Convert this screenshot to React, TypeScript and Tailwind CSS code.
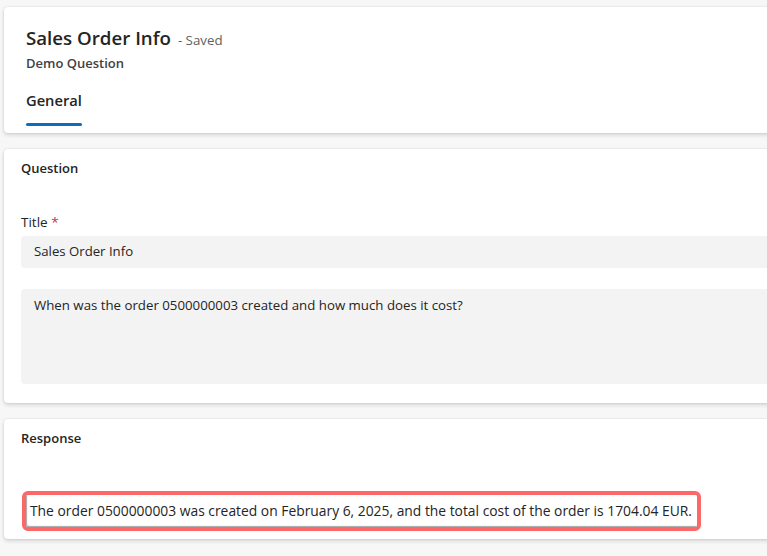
import React from "react"

const font = { fontFamily: '"Segoe UI", "Open Sans", "Noto Sans", sans-serif' }

const Card = ({ className, children }: { className?: string; children: React.ReactNode }) => (
  <div
    className={`ml-1 -mr-6 bg-white rounded-[4px] shadow-[0_0_2px_rgba(0,0,0,0.12),0_2px_4px_rgba(0,0,0,0.14)] ${className ?? ""}`}
  >
    {children}
  </div>
)

const App = () => {
  return (
    <div
      className="w-[767px] h-[556px] overflow-hidden bg-[#f7f7f7] pt-[7px] text-[#242424]"
      style={font}
    >
      <Card className="h-[126px] px-[22px] pt-[17px]">
        <div className="flex items-baseline gap-[7px]">
          <h1 className="text-[18.7px] font-semibold leading-[28px]">Sales Order Info</h1>
          <span className="text-[13.3px] text-[#616161]">- Saved</span>
        </div>
        <p className="text-[13px] font-semibold text-[#424242] leading-[18px] mt-[2px]">Demo Question</p>
        <div className="mt-[18px] inline-flex flex-col">
          <span className="text-[14.7px] font-semibold leading-[20px]">General</span>
          <span className="mt-[13px] h-[3px] rounded-full bg-[#0f6cbd]" />
        </div>
      </Card>

      <Card className="mt-4 h-[254px] px-[17px] pt-[10px]">
        <h2 className="text-[13px] font-semibold leading-[18px]">Question</h2>
        <label className="block mt-[35px] text-[13.5px] leading-[20px]">
          Title <span className="text-[#c4314b]">*</span>
        </label>
        <div className="mt-[4px] h-[32px] rounded-[4px] bg-[#f3f3f3] px-[13px] flex items-center text-[13.2px]">
          Sales Order Info
        </div>
        <div className="mt-[21px] h-[95px] rounded-[4px] bg-[#f3f3f3] px-[13px] pt-[6px] text-[13.25px] leading-[20px]">
          When was the order 0500000003 created and how much does it cost?
        </div>
      </Card>

      <Card className="mt-4 h-[120px] px-[17px] pt-[10px]">
        <h2 className="text-[13px] font-semibold leading-[18px]">Response</h2>
        <div className="mt-[44px] ml-[1px] inline-flex border-[4px] border-[#fc6767] rounded-[6px]">
          <div className="rounded-[2px] bg-white shadow-[inset_1px_-1px_1px_rgba(0,0,0,0.35)] pl-[4px] pr-[5px] py-[6px] text-[13.85px] leading-[20px]">
            The order 0500000003 was created on February 6, 2025, and the total cost of the order is 1704.04 EUR.
          </div>
        </div>
      </Card>
    </div>
  )
}

export default App
